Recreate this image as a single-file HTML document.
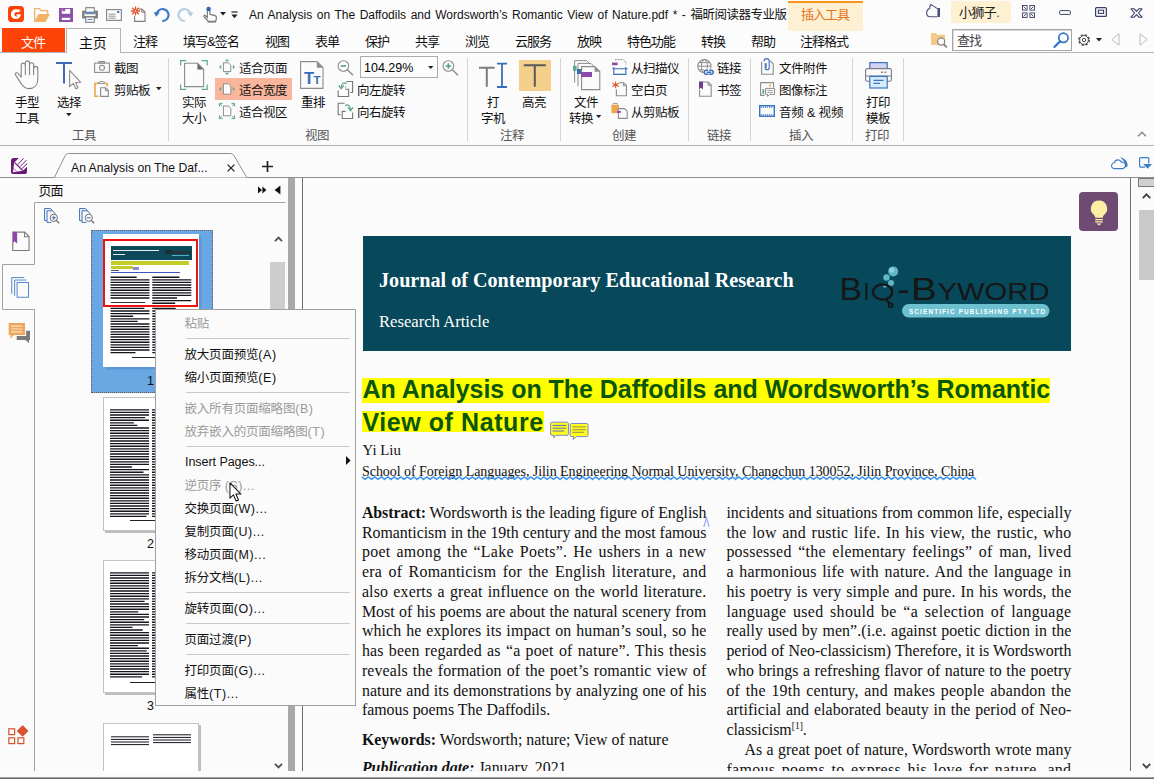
<!DOCTYPE html>
<html lang="zh">
<head>
<meta charset="utf-8">
<title>An Analysis on The Daffodils and Wordsworth’s Romantic View of Nature.pdf</title>
<style>
*{box-sizing:border-box;margin:0;padding:0}
html,body{width:1154px;height:779px;overflow:hidden;background:#fff}
body{position:relative;font-family:"Liberation Sans","Noto Sans CJK SC",sans-serif;font-size:12px;color:#111;line-height:1}
.a{position:absolute}
.t{position:absolute;white-space:nowrap;line-height:14px;height:14px;font-size:12.5px;letter-spacing:-.5px}
.l{letter-spacing:0}
.sep{position:absolute;width:1px;background:#d4d4d4;top:58px;height:83px}
.gl{color:#555}
svg{position:absolute;overflow:visible}
/* document */
.ser{font-family:"Liberation Serif",serif}
.pl{position:absolute;white-space:nowrap;font-family:"Liberation Serif",serif;font-size:15.9px;line-height:20px;height:20px;color:#111;text-align:justify;text-align-last:justify}
.mi{position:absolute;left:28.500px;white-space:nowrap;height:16px;line-height:16px;font-size:12.5px;color:#111;letter-spacing:-.2px}
.mi.d{color:#9a9a9a}
.l2{letter-spacing:.55px}
.ms{position:absolute;left:30px;right:5px;height:1px;background:#c8c8c8}
.tb{top:7px;color:#111;font-size:13px;letter-spacing:-1px}
.c1{left:361.900px;width:344.500px}
.c2{left:726.4px;width:345px}
.nj{text-align:left;text-align-last:left;width:auto}
.tx{background:repeating-linear-gradient(#16161c 0,#16161c 1.300px,#e8e8ec 2.050px,#e8e8ec 2.150px,#16161c 2.600px)}
</style>
</head>
<body>
<div class="a" id="titlebar" style="left:0;top:0;width:1154px;height:28px;background:#fcfcfc">
<!-- foxit logo -->
<svg style="left:8px;top:6px" width="16" height="16" viewBox="0 0 16 16"><rect width="16" height="16" rx="3.600" fill="#fd4208"/><circle cx="7.800" cy="8.200" r="4.900" fill="#fff"/><circle cx="8.700" cy="8.300" r="2.300" fill="#fd4208"/><path d="M8.700 8.300L13.200 3.800 13.600 8.300z" fill="#fd4208"/><rect x="8.600" y="8.300" width="3.700" height="1.700" fill="#fff"/><path d="M10.200 3.600l2.600 1.600" stroke="#fff" stroke-width="1.300" stroke-dasharray="1 .5"/></svg>
<!-- open folder -->
<svg style="left:34px;top:8px" width="17" height="14" viewBox="0 0 17 14"><path d="M.7 13.600V.7h4.900l1.400 1.900h6.600v3.500" fill="none" stroke="#f0b367" stroke-width="1.300"/><path d="M.2 13.900L4.400 6.100H15.900L11.600 13.900z" fill="#f0b367"/></svg>
<!-- save -->
<svg style="left:59px;top:8px" width="14" height="14" viewBox="0 0 14 14"><rect width="14" height="14" fill="#8b50a8"/><rect x="2.800" y="1" width="8.400" height="4.800" fill="#fcfcfc"/><rect x="3.400" y="1" width="2.800" height="2.200" fill="#8b50a8"/><rect x="2.800" y="9.800" width="8.400" height="2.200" fill="#fcfcfc"/></svg>
<!-- print -->
<svg style="left:82px;top:7px" width="16" height="16" viewBox="0 0 16 16"><rect x="1.300" y="4.900" width="13.400" height="5.400" fill="#fcfcfc" stroke="#7d7d7d" stroke-width="2.400"/><rect x="3.700" y=".7" width="8.600" height="6" fill="#fcfcfc" stroke="#7d7d7d" stroke-width="1.100"/><rect x="4.200" y="4.700" width="7.600" height="1.700" fill="#4e86c4"/><rect x="3.700" y="10" width="8.600" height="5.300" fill="#fcfcfc" stroke="#7d7d7d" stroke-width="1.100"/><rect x="5.400" y="11.900" width="5.200" height="1" fill="#4e86c4"/></svg>
<!-- email -->
<svg style="left:106px;top:9px" width="16" height="12" viewBox="0 0 16 12"><rect x=".6" y=".6" width="14.8" height="10.8" fill="#fcfcfc" stroke="#8a8a8a" stroke-width="1.2"/><rect x="11.2" y="2" width="2" height="2" fill="#2f63b0"/><path d="M2.6 5.2h7M2.6 7.2h7M2.6 9.2h7" stroke="#8a8a8a" stroke-width=".9"/></svg>
<!-- new -->
<svg style="left:130px;top:6px" width="16" height="16" viewBox="130 6 16 16"><path d="M138.600 9h3.400l3 3v9.400h-10.400v-5.400" fill="none" stroke="#7d7d7d" stroke-width="1.100"/><path d="M141.800 9.200v3h3" fill="none" stroke="#7d7d7d" stroke-width="1"/><path d="M135.500 6.400v9.200M130.900 11h9.200M132.200 7.700l6.600 6.600M132.200 14.300l6.600-6.600" stroke="#e2512a" stroke-width="1.300"/><circle cx="135.500" cy="11" r=".8" fill="#fcfcfc"/></svg>
<!-- undo -->
<svg style="left:153px;top:6px" width="17" height="17" viewBox="0 0 17 17"><path d="M3.6 8.2A6 6 0 1 1 9.2 15" fill="none" stroke="#3b7cc4" stroke-width="2.2"/><path d="M.6 6.2l6.2.2-3.6 4.4z" fill="#3b7cc4"/></svg>
<!-- redo -->
<svg style="left:177px;top:6px" width="17" height="17" viewBox="0 0 17 17"><path d="M13.4 8.2A6 6 0 1 0 7.8 15" fill="none" stroke="#b4cfe2" stroke-width="2.2"/><path d="M16.4 6.2l-6.2.2 3.6 4.4z" fill="#b4cfe2"/></svg>
<!-- hand pointer -->
<svg style="left:203px;top:6px" width="15" height="17" viewBox="0 0 15 17"><path d="M4.300 11.400V4.600a1.300 1.300 0 0 1 2.600 0v3.800l5 1.200c1.200.3 1.700 1 1.500 2.200l-.6 3.400H5.200L1 10.600c-.5-.8.500-1.700 1.300-1z" fill="#fcfcfc" stroke="#6e6e6e" stroke-width="1.100"/><path d="M4.400 16h8.400" stroke="#6e6e6e" stroke-width="1.100"/><circle cx="5.600" cy="3" r="2.200" fill="#2f63b0"/></svg>
<svg style="left:220px;top:12px" width="6" height="4" viewBox="0 0 6 4"><path d="M0 0h6L3 3.6z" fill="#222"/></svg>
<svg style="left:231px;top:11px" width="7" height="8" viewBox="0 0 7 8"><path d="M.4 1h6.2" stroke="#222" stroke-width="1.2"/><path d="M.4 3.6h6.2L3.5 7.2z" fill="#222"/></svg>
<div class="t" style="left:249px;top:7px;font-size:13px;line-height:16px;height:16px;color:#111" id="ttl"><span style="font-size:12px;letter-spacing:0;word-spacing:1.2px">An Analysis on The Daffodils and Wordsworth’s Romantic View of Nature.pdf * - </span><span style="font-size:12.5px;letter-spacing:-.5px">福昕阅读器专业版</span></div>
<!-- insert tools context tab -->
<!-- skin -->
<svg style="left:926px;top:4px" width="15" height="14" viewBox="0 0 15 14"><path d="M11.400 12.800H4.200C2 12.800.6 11 .6 8.800.6 6.600 2 5.200 3.600 4.600L4.400.6 6.400 1.400 11.400 4.600" fill="none" stroke="#4a4f7a" stroke-width="1.100" stroke-linejoin="round"/><rect x="11.400" y="4" width="2.600" height="9" fill="#4a4f7a"/></svg>
<div class="a" style="left:951px;top:1px;width:60px;height:22px;background:#fdf1d2"></div>
<div class="t" style="left:959px;top:5px;font-size:13px;letter-spacing:-.6px;line-height:16px;height:16px;color:#222">小狮子<span style="color:#5a4a3a">.</span></div>
<!-- fullscreen -->
<svg style="left:1022px;top:5px" width="13" height="13" viewBox="0 0 13 13" fill="none" stroke="#3a3f66" stroke-width=".9"><rect x=".5" y=".5" width="4.6" height="4.6"/><rect x="7.9" y=".5" width="4.6" height="4.6"/><rect x=".5" y="7.9" width="4.6" height="4.6"/><rect x="7.9" y="7.9" width="4.6" height="4.6"/><path d="M1.6 1.6l2.4 2.4M11.4 1.6L9 4M1.6 11.4L4 9M11.4 11.4L9 9" stroke-width=".9"/></svg>
<!-- min -->
<svg style="left:1059px;top:10px" width="12" height="5" viewBox="0 0 12 5"><rect x=".6" y=".6" width="10.8" height="3.8" rx="1" fill="none" stroke="#3a3f66" stroke-width="1"/></svg>
<!-- max -->
<svg style="left:1095px;top:7px" width="12" height="10" viewBox="0 0 12 10"><rect x=".6" y=".6" width="10.8" height="8.8" rx="1" fill="none" stroke="#3a3f66" stroke-width="1.2"/><rect x="3.4" y="3.2" width="5.2" height="3.2" fill="none" stroke="#3a3f66" stroke-width="1.1"/></svg>
<!-- close -->
<svg style="left:1130px;top:8px" width="13" height="10" viewBox="0 0 13 10"><path d="M1 .8h3.2L6.5 3.4 8.8.8H12L8.4 5 12 9.2H8.8L6.5 6.6 4.2 9.2H1L4.6 5z" fill="none" stroke="#3a3f66" stroke-width="1.1" stroke-linejoin="round"/></svg>
</div>

<div class="a" id="tabrow" style="left:0;top:28px;width:1154px;height:25px;background:#fcfcfc;border-bottom:1px solid #b4b4b4">
<div class="a" style="left:2px;top:0;width:63px;height:24px;background:#fd4308"></div>
<div class="t" style="left:21px;top:8px;color:#fff;font-size:13px;letter-spacing:-1px">文件</div>
<div class="a" style="left:66px;top:0;width:55px;height:25px;background:#fcfcfc;border:1px solid #b4b4b4;border-bottom:none"></div>
<div class="t" style="left:79px;top:7px;font-size:14px;letter-spacing:-.3px;line-height:16px;height:16px;color:#111">主页</div>
<div class="t tb" style="left:133px">注释</div>
<div class="t tb" style="left:183px">填写&amp;签名</div>
<div class="t tb" style="left:265px">视图</div>
<div class="t tb" style="left:315px">表单</div>
<div class="t tb" style="left:365px">保护</div>
<div class="t tb" style="left:415px">共享</div>
<div class="t tb" style="left:465px">浏览</div>
<div class="t tb" style="left:515px">云服务</div>
<div class="t tb" style="left:577px">放映</div>
<div class="t tb" style="left:627px">特色功能</div>
<div class="t tb" style="left:701px">转换</div>
<div class="t tb" style="left:751px">帮助</div>
<div class="t tb" style="left:800px">注释格式</div>
<!-- search folder -->
<svg style="left:931px;top:5px" width="17" height="15" viewBox="0 0 17 15"><path d="M0 0h5l1.4 1.8H14V12H0z" fill="#f3c98a"/><circle cx="10.2" cy="8.6" r="3.6" fill="#fcfcfc" stroke="#777" stroke-width="1.1"/><path d="M12.8 11.4l3 3" stroke="#777" stroke-width="1.5"/></svg>
<div class="a" style="left:952px;top:1px;width:120px;height:22px;background:#fff;border:1px solid #a6a6a6;box-shadow:inset 1px 1px 0 #d8d8d8"></div>
<div class="t" style="left:957px;top:6px;color:#444;font-size:13px;letter-spacing:-1px">查找</div>
<svg style="left:1053px;top:4px" width="17" height="16" viewBox="0 0 17 16"><circle cx="10.4" cy="5.8" r="4.6" fill="#fff" stroke="#2e75c7" stroke-width="1.7"/><path d="M7 9.4L1.4 15" stroke="#2e75c7" stroke-width="2.2" stroke-linecap="round"/></svg>
<!-- gear -->
<svg style="left:1077px;top:5px" width="14" height="14" viewBox="0 0 14 14"><circle cx="7" cy="7" r="5.2" fill="none" stroke="#444" stroke-width="1.4" stroke-dasharray="2.2 1.9"/><circle cx="7" cy="7" r="4.4" fill="none" stroke="#444" stroke-width=".9"/><circle cx="7" cy="7" r="1.7" fill="none" stroke="#444" stroke-width="1"/></svg>
<svg style="left:1096px;top:10px" width="6" height="4" viewBox="0 0 6 4"><path d="M0 0h6L3 3.4z" fill="#222"/></svg>
<svg style="left:1111px;top:5px" width="9" height="13" viewBox="0 0 9 13"><path d="M8 .8v11.4L.8 6.5z" fill="none" stroke="#bcbcbc" stroke-width="1"/></svg>
<svg style="left:1139px;top:5px" width="9" height="13" viewBox="0 0 9 13"><path d="M1 .8v11.4L8.2 6.5z" fill="none" stroke="#bcbcbc" stroke-width="1"/></svg>
<div class="a" style="left:788px;top:-27px;width:75px;height:30px;background:#fdf0d3;border-top:2px solid #f7941d"></div>
<div class="t" style="left:801px;top:-21px;font-size:13px;letter-spacing:-1px;line-height:16px;height:16px;color:#e8731a">插入工具</div>
</div>

<div class="a" id="ribbonbg" style="left:0;top:53px;width:1154px;height:93px;background:#fbfbfb;border-bottom:1px solid #b4b4b4"></div>
<div class="a" id="ribbon" style="left:0;top:0;width:0;height:0">
<!-- ===== group 工具 ===== -->
<svg style="left:14px;top:60px" width="26" height="30" viewBox="0 0 26 30" fill="none" stroke="#858585" stroke-width="1.100" stroke-linecap="round" stroke-linejoin="round"><path d="M7.200 17.200V5.200a2.070 2.070 0 0 1 4.150 0V14.600M11.350 5V2.900a2.070 2.070 0 0 1 4.150 0V14.600M15.500 4.800a2.070 2.070 0 0 1 4.150 0V14.600M19.650 8.400a2.070 2.070 0 0 1 4.150 0V19c0 6-3.600 9.600-9 9.600-3.600 0-5.600-1.500-7.600-5L1.500 14.900c-.8-1.500.9-2.900 2.300-1.700l3.400 3.800"/></svg>
<div class="t" style="left:15px;top:96px">手型</div>
<div class="t" style="left:15px;top:112px">工具</div>
<svg style="left:56px;top:62px" width="26" height="28" viewBox="0 0 26 28"><path d="M0 1h16M8 1v20.500" stroke="#3a6db5" stroke-width="2" fill="none"/><path d="M13.600 8.400v16.200l3.800-3.200 2.300 5.400 2.300-1-2.400-5.200 5-.4z" fill="#fbfbfb" stroke="#8c8c8c" stroke-width="1.100" stroke-linejoin="round"/></svg>
<div class="t" style="left:57px;top:96px">选择</div>
<svg style="left:66px;top:113px" width="6" height="4" viewBox="0 0 6 4"><path d="M0 0h5.600L2.800 3.200z" fill="#222"/></svg>
<svg style="left:94px;top:61px" width="16" height="12" viewBox="0 0 16 12" fill="none" stroke="#8c8c8c"><rect x="5" y=".5" width="5.600" height="1.600" stroke-width="1"/><rect x=".6" y="2.100" width="14.800" height="9.300" stroke-width="1.100"/><circle cx="8" cy="6.700" r="2.500" stroke-width="1.100"/></svg>
<div class="t" style="left:114px;top:62px">截图</div>
<svg style="left:94px;top:81px" width="16" height="16" viewBox="0 0 16 16" fill="none"><path d="M4.500 2.400H1v12.800h3.600" stroke="#f0a64c" stroke-width="1.600"/><path d="M4.500 2.600V1.200h2V.5h2.600v.7h2v1.400z" stroke="#8c8c8c" stroke-width=".9"/><path d="M11.800 2.500h1.400v3" stroke="#f0a64c" stroke-width="1.600"/><path d="M6.600 6.800h5l2.800 2.800v5.800H6.600z" fill="#fbfbfb" stroke="#8c8c8c" stroke-width="1.100"/><path d="M11.400 7v2.800h2.800" stroke="#8c8c8c" stroke-width="1"/></svg>
<div class="t" style="left:114px;top:84px">剪贴板</div>
<svg style="left:156px;top:87px" width="6" height="4" viewBox="0 0 6 4"><path d="M0 0h5.600L2.800 3.200z" fill="#222"/></svg>
<div class="t gl" style="left:72px;top:129px">工具</div>
<div class="sep" style="left:168px"></div>
<!-- ===== group 视图 ===== -->
<svg style="left:180px;top:60px" width="28" height="30" viewBox="0 0 28 30" fill="none"><path d="M.6 5.600V.6h5.600M21.600.6h5.600v5M27.200 24.400v5h-5.600M6.200 29.400H.6v-5" stroke="#5fa88c" stroke-width="1.200"/><path d="M4.600 3.200h13l6 6v17.400H4.600z" fill="#fbfbfb" stroke="#8c8c8c" stroke-width="1.100"/><path d="M17.400 3.200v6.200h6.200z" fill="#6a6a6a"/></svg>
<div class="t" style="left:182px;top:96px">实际</div>
<div class="t" style="left:182px;top:112px">大小</div>
<svg style="left:219px;top:59px" width="16" height="16" viewBox="0 0 16 16" fill="none"><path d="M4.400 3.800h5l2.400 2.400v6.400H4.400z" fill="#fbfbfb" stroke="#8c8c8c" stroke-width="1"/><path d="M8 0l2.200 2.200H5.800zM8 16l2.200-2.200H5.800zM0 8l2.200-2.200v4.400zM16 8l-2.200-2.200v4.400z" fill="#5fa88c"/></svg>
<div class="t" style="left:239px;top:62px">适合页面</div>
<div class="a" style="left:215px;top:78px;width:77px;height:22px;background:#f9b69d"></div>
<svg style="left:219px;top:81px" width="16" height="16" viewBox="0 0 16 16" fill="none"><path d="M4.400 2.800h5l2.400 2.400v8H4.400z" fill="#fbfbfb" stroke="#8c8c8c" stroke-width="1"/><path d="M0 8l2.200-2.200v4.400zM16 8l-2.200-2.200v4.400z" fill="#5fa88c"/></svg>
<div class="t" style="left:239px;top:84px">适合宽度</div>
<svg style="left:219px;top:103px" width="16" height="16" viewBox="0 0 16 16" fill="none"><path d="M4.400 3h5l2.400 2.400v7.400H4.400z" fill="#fbfbfb" stroke="#8c8c8c" stroke-width="1"/><path d="M.4 3.600V.4h3.200M12.400.4h3.200v3.200M15.600 12.400v3.200h-3.200M3.600 15.600H.4v-3.200M.6.600l2.400 2.400M15.400.6L13 3M.6 15.400L3 13M15.400 15.400L13 13" stroke="#5fa88c" stroke-width="1"/></svg>
<div class="t" style="left:239px;top:106px">适合视区</div>
<svg style="left:300px;top:61px" width="24" height="28" viewBox="0 0 24 28" fill="none"><path d="M.6.600h16.400l6 6v20.800H.6z" fill="#fbfbfb" stroke="#8c8c8c" stroke-width="1.100"/><path d="M16.800.6v6.200h6.200z" fill="#8c8c8c"/><text x="4" y="23" font-family="Liberation Sans,sans-serif" font-weight="bold" font-size="16.5" fill="#3a6db5" stroke="none">T</text><text x="13.4" y="23" font-family="Liberation Sans,sans-serif" font-weight="bold" font-size="11.5" fill="#3a6db5" stroke="none">T</text></svg>
<div class="t" style="left:301px;top:96px">重排</div>
<svg style="left:337px;top:60px" width="17" height="16" viewBox="0 0 17 16" fill="none"><circle cx="6.400" cy="6" r="5.300" fill="#fff" stroke="#8c8c8c" stroke-width="1.100"/><path d="M10.400 9.800l5.600 5.400" stroke="#8c8c8c" stroke-width="1.500"/><path d="M3.600 6h5.600" stroke="#4fa27c" stroke-width="1.600"/></svg>
<div class="a" style="left:360px;top:56px;width:78px;height:22px;background:#fdfdfd;border:1px solid #ababab"></div>
<div class="t" style="left:364px;top:61px;font-size:12.5px;letter-spacing:0;color:#000">104.29%</div>
<svg style="left:428px;top:66px" width="6" height="4" viewBox="0 0 6 4"><path d="M0 0h5.400L2.700 3z" fill="#222"/></svg>
<svg style="left:442px;top:60px" width="17" height="16" viewBox="0 0 17 16" fill="none"><circle cx="6.400" cy="6" r="5.300" fill="#fff" stroke="#8c8c8c" stroke-width="1.100"/><path d="M10.400 9.800l5.600 5.400" stroke="#8c8c8c" stroke-width="1.500"/><path d="M3.600 6h5.600M6.400 3.200v5.600" stroke="#4fa27c" stroke-width="1.600"/></svg>
<svg style="left:336px;top:79px" width="20" height="20" viewBox="336 79 20 20" fill="none"><path d="M346.500 81.500h6.100v11h-2.400" stroke="#777" stroke-width="1.100"/><path d="M338.200 90.300v6.200h10.400v-7.300h-3.400" stroke="#777" stroke-width="1.100"/><path d="M345.400 86.600v1" stroke="#777" stroke-width="1"/><path d="M346.800 83.600c-2.600-1.400-5.400-.6-5.600 4" stroke="#5fa88c" stroke-width="1.200"/><path d="M338.800 85.400l2.400 3.200 2.600-3.200" stroke="#5fa88c" stroke-width="1.500"/></svg>
<div class="t" style="left:357px;top:84px">向左旋转</div>
<svg style="left:336px;top:101px" width="20" height="20" viewBox="336 101 20 20" fill="none"><path d="M344.600 103.300h-6.400v11.400h2.400" stroke="#777" stroke-width="1.100"/><path d="M345.600 111.400h-3.400v7.100h10.400v-6.100" stroke="#777" stroke-width="1.100"/><path d="M345.200 105.600c2.600-1.400 5.200-.6 5.400 4.400" stroke="#5fa88c" stroke-width="1.200"/><path d="M348 107.400l2.600 3.200 2.400-3.200" stroke="#5fa88c" stroke-width="1.500"/></svg>
<div class="t" style="left:357px;top:106px">向右旋转</div>
<div class="t gl" style="left:305px;top:129px">视图</div>
<div class="sep" style="left:467px"></div>
<!-- ===== group 注释 ===== -->
<svg style="left:479px;top:62px" width="29" height="27" viewBox="0 0 29 27" fill="none"><path d="M0 5.800h15.600M7.800 5.800v19" stroke="#7d7d7d" stroke-width="2"/><path d="M18 1.600h10M23 1.600v23.400M18 25h10" stroke="#3a6db5" stroke-width="1.800"/></svg>
<div class="t" style="left:487px;top:96px">打</div>
<div class="t" style="left:481px;top:112px">字机</div>
<div class="a" style="left:519px;top:60px;width:32px;height:31px;background:#f5d08c"></div>
<svg style="left:523px;top:64px" width="24" height="23" viewBox="0 0 24 23" fill="none"><path d="M.8 1.200h22M11.800 1.200v21.600" stroke="#595959" stroke-width="2"/></svg>
<div class="t" style="left:522px;top:96px">高亮</div>
<div class="t gl" style="left:500px;top:129px">注释</div>
<div class="sep" style="left:560px"></div>
<!-- ===== group 创建 ===== -->
<svg style="left:573px;top:60px" width="28" height="30" viewBox="0 0 28 30" fill="none"><path d="M1.600 22.600V.6h12l3.600 3.600" stroke="#8c8c8c" stroke-width="1"/><path d="M5 26.200V3.400h13l3.600 3.600" stroke="#8c8c8c" stroke-width="1"/><path d="M8.600 6.600h13.200l5 5v18H8.600z" fill="#fbfbfb" stroke="#8c8c8c" stroke-width="1.100"/><path d="M21.600 6.600v5.200h5.200z" fill="#8c8c8c"/><rect x="0" y="5.800" width="3.600" height="5" fill="#5fa88c"/><rect x="4" y="9" width="4.200" height="5" fill="#3a6db5"/><rect x="8" y="12" width="11" height="5" fill="#8c4aa8"/></svg>
<div class="t" style="left:574px;top:96px">文件</div>
<div class="t" style="left:569px;top:112px">转换</div>
<svg style="left:596px;top:115px" width="6" height="4" viewBox="0 0 6 4"><path d="M0 0h5.400L2.700 3z" fill="#222"/></svg>
<svg style="left:612px;top:59px" width="16" height="16" viewBox="0 0 16 16" fill="none"><path d="M3 .6h8.400l2.400 2.400v2.600" stroke="#8c8c8c" stroke-width="1" stroke-dasharray="1.800 1"/><rect x="0" y="3.600" width="5.600" height="2.600" fill="#8c4aa8"/><path d="M1.800 8v7.400h12V8M.4 9.800h15.200" stroke="#3a6db5" stroke-width="1.100"/></svg>
<div class="t" style="left:631px;top:62px">从扫描仪</div>
<svg style="left:612px;top:81px" width="16" height="16" viewBox="0 0 16 16" fill="none"><path d="M7.200 1.800h4.400l2.800 2.800v10.200H4.400V8.400" stroke="#8c8c8c" stroke-width="1.100"/><path d="M11.400 2v2.800h2.800" stroke="#8c8c8c" stroke-width="1"/><path d="M3.600.4v6.800M.4 2.200l6.400 3.200M.4 5.400l6.400-3.200" stroke="#e2512a" stroke-width="1.100"/></svg>
<div class="t" style="left:631px;top:84px">空白页</div>
<svg style="left:611px;top:103px" width="17" height="16" viewBox="0 0 17 16" fill="none"><path d="M.4 1.800h7.600v8.400H.4z" fill="#f0a64c"/><path d="M2.200 1.600V.4h4v1.200" stroke="#8c8c8c" stroke-width=".9"/><path d="M7.400 5.600h6.200l2.600 2.600v7.200H7.400z" fill="#fbfbfb" stroke="#8c8c8c" stroke-width="1.100"/><rect x="6" y="8" width="4" height="1.800" fill="#8c4aa8"/></svg>
<div class="t" style="left:631px;top:106px">从剪贴板</div>
<div class="t gl" style="left:612px;top:129px">创建</div>
<div class="sep" style="left:688px"></div>
<!-- ===== group 链接 ===== -->
<svg style="left:697px;top:59px" width="17" height="16" viewBox="0 0 17 16" fill="none"><circle cx="7.400" cy="7.200" r="6.600" stroke="#8c8c8c" stroke-width="1.100"/><ellipse cx="7.400" cy="7.200" rx="3" ry="6.600" stroke="#8c8c8c" stroke-width="1"/><path d="M.8 7.200h13.200M2 3.600h10.800M2 10.800h7" stroke="#8c8c8c" stroke-width="1"/><rect x="6.600" y="9.600" width="10.400" height="6.400" fill="#fbfbfb"/><path d="M11 11.200H9.200a2 2 0 0 0 0 4h2.200M12.200 11.200h2a2 2 0 0 1 0 4h-2M9.600 13.200h4.600" stroke="#3a6db5" stroke-width="1.500"/></svg>
<div class="t" style="left:717px;top:62px">链接</div>
<svg style="left:699px;top:81px" width="13" height="16" viewBox="0 0 13 16" fill="none"><path d="M3.800 1h5.400l3 3v11.200H.6V9" stroke="#8c8c8c" stroke-width="1.100"/><path d="M9 1.200v3h3" stroke="#8c8c8c" stroke-width="1"/><path d="M0 .4h4v8.200l-2-1.800-2 1.800z" fill="#6d3f8e"/></svg>
<div class="t" style="left:717px;top:84px">书签</div>
<div class="t gl" style="left:707px;top:129px">链接</div>
<div class="sep" style="left:750px"></div>
<!-- ===== group 插入 ===== -->
<svg style="left:761px;top:59px" width="13" height="16" viewBox="0 0 13 16" fill="none"><path d="M.6 2.800v12.400h11.600V4.800L9 1.600" stroke="#8c8c8c" stroke-width="1.100"/><path d="M3.200 5v4.600a2 2 0 0 0 4 0V3a2.600 2.600 0 0 0-5.200 0" stroke="#3a6db5" stroke-width="1.100" transform="translate(1 -.8)"/><path d="M5.200 4v5" stroke="#3a6db5" stroke-width="1"/></svg>
<div class="t" style="left:779px;top:62px">文件附件</div>
<svg style="left:760px;top:82px" width="15" height="15" viewBox="0 0 15 15" fill="none"><path d="M.6.600h13v5M.6.600v12.800h4" stroke="#8c8c8c" stroke-width="1.100"/><rect x="2.400" y="7.200" width="1.800" height="4.600" fill="#5fa88c"/><circle cx="10" cy="3.600" r="1.100" fill="#f0a64c"/><path d="M5.600 6.400h9v6h-5l-2 2v-2h-2z" fill="#fbfbfb" stroke="#8c8c8c" stroke-width="1"/><path d="M7.400 8.400h5.400M7.400 10.400h5.400" stroke="#8c8c8c" stroke-width=".8"/></svg>
<div class="t" style="left:779px;top:84px">图像标注</div>
<svg style="left:759px;top:105px" width="16" height="12" viewBox="0 0 16 12" fill="none"><rect x=".7" y=".7" width="14.600" height="10.600" stroke="#3d74c0" stroke-width="1.400"/><path d="M1.600 2.200h13M1.600 9.800h13" stroke="#3d74c0" stroke-width="1.200" stroke-dasharray="1.200 .9"/></svg>
<div class="t" style="left:779px;top:106px;letter-spacing:-.15px">音频 &amp; 视频</div>
<div class="t gl" style="left:789px;top:129px">插入</div>
<div class="sep" style="left:852px"></div>
<!-- ===== group 打印 ===== -->
<svg style="left:865px;top:62px" width="27" height="27" viewBox="0 0 27 27" fill="none"><rect x="4.800" y=".6" width="17.400" height="8" fill="#cfd4f2" stroke="#3d74c0" stroke-width="1.200"/><rect x=".6" y="6.600" width="25.800" height="12.600" rx="1.600" fill="#fbfbfb" stroke="#7d7d7d" stroke-width="1.100"/><path d="M.8 14h25.400" stroke="#7d7d7d" stroke-width="1"/><path d="M16 10.200h2M19.400 10.200h2" stroke="#555" stroke-width="1"/><rect x="4.800" y="14.400" width="17.400" height="11.600" fill="#d6ecfb" stroke="#3d74c0" stroke-width="1.200"/><path d="M8.600 18.400h10M8.600 21.400h6.400" stroke="#3d74c0" stroke-width="1.100"/></svg>
<div class="t" style="left:866px;top:96px">打印</div>
<div class="t" style="left:866px;top:112px">模板</div>
<div class="t gl" style="left:865px;top:129px">打印</div>
<div class="sep" style="left:903px"></div>
<svg style="left:1137px;top:131px" width="10" height="6" viewBox="0 0 10 6"><path d="M1 5.200L5 1.200l4 4" fill="none" stroke="#8a8a8a" stroke-width="1.500"/></svg>
</div>

<!-- DOC TAB BAR -->
<div class="a" id="doctabs" style="left:0;top:146px;width:1154px;height:32px;background:#fbfbfb;border-bottom:1px solid #8e8e8e"></div>
<svg style="left:11px;top:158px" width="16" height="16" viewBox="0 0 16 16"><path d="M2.600 0H16V13.400A2.600 2.600 0 0 1 13.400 16H2.600A2.600 2.600 0 0 1 0 13.400V2.600A2.600 2.600 0 0 1 2.600 0z" fill="#6a1b7a"/><path d="M2 14.200L3.200 4.600 7.800 0H16.200V8.400L11.800 12.800z" fill="#fbfbfb"/><path d="M6.600 6.800L12.600.4M8.800 8.800L15.400 2.200M10.800 10.800L16.200 5.600" stroke="#6a1b7a" stroke-width="1" fill="none"/><path d="M3.400 4.400L11.800 12.600" stroke="#6a1b7a" stroke-width="1.200" fill="none"/><path d="M2.600 10.400L5.800 13.600" stroke="#6a1b7a" stroke-width=".6" fill="none"/></svg>
<svg style="left:50px;top:150px" width="202" height="29" viewBox="0 0 202 29"><path d="M4.400 27.500L15.200 5.600Q16.400 3.500 18.600 3.500H180.600Q182.800 3.500 184 5.600L196.800 27.500" fill="#fbfbfb" stroke="#8e8e8e" stroke-width="1"/></svg>
<div class="t" id="dtab" style="left:71px;top:161px;font-size:12.2px;letter-spacing:0">An Analysis on The Daf...</div>
<svg style="left:227px;top:164px" width="8" height="8" viewBox="0 0 8 8"><path d="M.6.600l6.800 6.800M7.400.6L.6 7.400" stroke="#222" stroke-width="1.300"/></svg>
<svg style="left:262px;top:161px" width="11" height="11" viewBox="0 0 11 11"><path d="M5.500 0v11M0 5.500h11" stroke="#222" stroke-width="1.700"/></svg>
<!-- cloud + download -->
<svg style="left:1111px;top:157px" width="17" height="13" viewBox="0 0 17 13" fill="none"><path d="M3.600 11.600a2.900 2.900 0 0 1-.3-5.800 3.800 3.800 0 0 1 7.200-.6 3.100 3.100 0 0 1 1.400 6.400z" stroke="#3b7cc4" stroke-width="1.100"/><path d="M8.800.4c4.600 0 8 3.600 7.800 8.400-.4 1.400-1.600 1.800-2.800.8 1-3-1-6.800-5-9.200z" fill="#3b7cc4"/></svg>
<svg style="left:1139px;top:157px" width="14" height="12" viewBox="0 0 14 12" fill="none"><path d="M6 10.200H1.800a1.200 1.200 0 0 1-1.200-1.200V1.800A1.200 1.200 0 0 1 1.800.6h6.800a1.200 1.200 0 0 1 1.200 1.200v4.600" stroke="#3b7cc4" stroke-width="1.200"/><path d="M4.200 7h8.800l-4.400 4.800z" fill="#3b7cc4"/></svg>
<!-- LEFT NAV -->
<div class="a" id="leftnav" style="left:0;top:178px;width:302px;height:593px;background:#fbfbfb"></div>
<div class="t" style="left:38.500px;top:184px;font-size:13px;letter-spacing:-1px">页面</div>
<svg style="left:258px;top:186px" width="9" height="8" viewBox="0 0 9 8"><path d="M0 .4l4 3.600-4 3.600zM4.400.4l4 3.600-4 3.600z" fill="#111"/></svg>
<svg style="left:274px;top:185px" width="7" height="10" viewBox="0 0 7 10"><path d="M6.400.4v9.200L.6 5z" fill="#111"/></svg>
<!-- panel inner box w/ tab notch -->
<svg style="left:0;top:200px" width="290" height="575" viewBox="0 0 290 575" fill="none"><path d="M285.500 2.500H34.500V64.500H2.500V109.500H34.500V571" stroke="#a2a2a2" stroke-width="1"/></svg>
<!-- zoom thumbnails icons -->
<svg style="left:44px;top:208px" width="16" height="16" viewBox="0 0 16 16" fill="none"><path d="M2.600 12.600H.6V.6h6l2 2" stroke="#3a6db5" stroke-width="1"/><path d="M7.400 14.400H3V2.800h5.400l3 3" stroke="#3a6db5" stroke-width="1"/><circle cx="9.800" cy="9.800" r="3.600" fill="#fbfbfb" stroke="#6e6e6e" stroke-width="1"/><path d="M12.400 12.600l2.800 2.600" stroke="#6e6e6e" stroke-width="1.300"/><path d="M7.800 9.800h4M9.800 7.800v4" stroke="#3a6db5" stroke-width="1"/></svg>
<svg style="left:79px;top:208px" width="16" height="16" viewBox="0 0 16 16" fill="none"><path d="M2.600 12.600H.6V.6h6l2 2" stroke="#3a6db5" stroke-width="1"/><path d="M7.400 14.400H3V2.800h5.400l3 3" stroke="#3a6db5" stroke-width="1"/><circle cx="9.800" cy="9.800" r="3.600" fill="#fbfbfb" stroke="#6e6e6e" stroke-width="1"/><path d="M12.400 12.600l2.800 2.600" stroke="#6e6e6e" stroke-width="1.300"/><path d="M7.800 9.800h4" stroke="#3a6db5" stroke-width="1"/></svg>
<!-- nav icons -->
<svg style="left:11.500px;top:231px" width="18" height="21" viewBox="0 0 19 21" fill="none"><path d="M5.400.6h8l4.600 4.600v14.800H.8V12" stroke="#7d7d7d" stroke-width="1.200"/><path d="M13.200.8v4.600h4.600" stroke="#7d7d7d" stroke-width="1.100"/><path d="M.4 0h5v12.800l-2.500-2.600-2.500 2.600z" fill="#8a4aa6"/></svg>
<svg style="left:11px;top:277px" width="18.500" height="21" viewBox="0 0 19 22" fill="none" stroke="#4a82c4" stroke-width="1"><path d="M.6 17.600V.6h13"/><path d="M3.600 19.600V3.200h12.400"/><rect x="6.200" y="5.800" width="12" height="15.400" fill="#fbfbfb"/></svg>
<svg style="left:8px;top:322px" width="23" height="22" viewBox="0 0 23 22" fill="none"><path d="M8.700 8.800H22V18H21v3.300L17.500 18H8.700z" fill="#7a7a7a"/><path d="M.7 1H17v12H6L2.500 16.500V13H.7z" fill="#f0a65a" stroke="#fbfbfb" stroke-width="2.200"/><path d="M.7 1H17v12H6L2.500 16.500V13H.7z" fill="#f0a65a"/><path d="M3 4.200h11.400M3 7h11.400M3 9.800h11.400" stroke="#fbe3c4" stroke-width="1.200"/></svg>
<svg style="left:8px;top:725px" width="20" height="20" viewBox="0 0 20 20" fill="none" stroke="#d9532c" stroke-width="1.200"><rect x=".8" y="3.800" width="5.800" height="5.800"/><rect x=".8" y="12.800" width="5.800" height="5.800"/><rect x="10" y="12.800" width="5.800" height="5.800"/><path d="M14.600 1l5 5-5 5-5-5z" fill="#d9532c"/></svg>
<!-- thumbnails -->
<div class="a" style="left:91px;top:230px;width:122px;height:163px;background:#6aa8e3;border:1px dotted #6b5a4a"></div>
<div class="a pg" style="left:103px;top:234px;width:96px;height:133px;background:#fff;box-shadow:2.5px 2.5px 0 #5a96d6"></div>
<div class="a" style="left:110.500px;top:246px;width:81px;height:13.600px;background:#0c4a5a"></div>
<div class="a" style="left:112.500px;top:250px;width:46px;height:1.200px;background:#e4eef0"></div>
<div class="a" style="left:112.500px;top:254px;width:12px;height:1.200px;background:#e4eef0"></div>
<div class="a" style="left:165px;top:249.500px;width:7px;height:4px;background:#1c2f36"></div>
<div class="a" style="left:172px;top:251px;width:18px;height:2.500px;background:#25333a"></div>
<div class="a" style="left:172px;top:254.500px;width:17px;height:1.500px;background:#58aebb"></div>
<div class="a" style="left:110.500px;top:261.400px;width:78.500px;height:3.200px;background:#c4cc2a"></div>
<div class="a" style="left:110.500px;top:265.600px;width:22px;height:3.200px;background:#c4cc2a"></div>
<div class="a" style="left:133px;top:266.500px;width:5.500px;height:3px;background:#8a8ad6"></div>
<div class="a" style="left:110.500px;top:269.800px;width:8px;height:1px;background:#555"></div>
<div class="a" style="left:110.500px;top:271.600px;width:69px;height:1.800px;background:#4257c4"></div>
<svg style="left:0;top:0" width="1" height="1"><path d="M110.5 277.20h26.2M110.5 279.80h39.0M110.5 282.40h39.0M110.5 285.00h39.0M110.5 287.60h39.0M110.5 290.20h39.0M110.5 292.80h39.0M110.5 295.40h39.0M110.5 298.00h39.0" stroke="#15151d" stroke-width="1.35" fill="none"/></svg>
<div class="a" style="left:110.500px;top:301.500px;width:34px;height:1.400px;background:#333"></div>
<svg style="left:0;top:0" width="1" height="1"><path d="M152.3 277.20h27.1M152.3 279.80h39.0M152.3 282.40h39.0M152.3 285.00h39.0M152.3 287.60h39.0M152.3 290.20h39.0M152.3 292.80h39.0M152.3 295.40h39.0M152.3 298.00h24.7M152.3 300.60h39.0M152.3 303.20h22.9" stroke="#15151d" stroke-width="1.35" fill="none"/></svg>
<svg style="left:0;top:0" width="1" height="1"><path d="M110.5 308.40h33.9M110.5 311.00h39.0M110.5 313.60h39.0M110.5 316.20h22.7M110.5 318.80h39.0M110.5 321.40h27.2M110.5 324.00h39.0M110.5 326.60h39.0M110.5 329.20h39.0M110.5 331.80h39.0M110.5 334.40h39.0M110.5 337.00h39.0M110.5 339.60h39.0M110.5 342.20h39.0M110.5 344.80h39.0M110.5 347.40h39.0M110.5 350.00h39.0M110.5 352.60h25.0" stroke="#15151d" stroke-width="1.35" fill="none"/></svg>
<svg style="left:0;top:0" width="1" height="1"><path d="M152.3 308.40h23.4M152.3 311.00h39.0M152.3 313.60h32.2M152.3 316.20h39.0M152.3 318.80h39.0M152.3 321.40h39.0M152.3 324.00h39.0M152.3 326.60h39.0M152.3 329.20h36.3M152.3 331.80h26.4M152.3 334.40h39.0M152.3 337.00h39.0M152.3 339.60h39.0M152.3 342.20h34.3M152.3 344.80h39.0M152.3 347.40h39.0M152.3 350.00h39.0M152.3 352.60h22.5" stroke="#15151d" stroke-width="1.35" fill="none"/></svg>
<div class="a" style="left:131.600px;top:356.600px;width:60px;height:1px;background:#222"></div>
<div class="a" style="left:103px;top:239px;width:95px;height:68px;border:2px solid #ee1111"></div>
<div class="t" style="left:147px;top:374px;font-size:12.5px;letter-spacing:0;color:#111">1</div>
<div class="a pg" style="left:103px;top:397px;width:96px;height:134px;background:#fff;border:1px solid #c4c4c4;box-shadow:2px 2px 0 #bdbdbd"></div>
<svg style="left:0;top:0" width="1" height="1"><path d="M110.0 409.80h39.0M110.0 412.40h39.0M110.0 415.00h39.0M110.0 417.60h35.2M110.0 420.20h39.0M110.0 422.80h23.8M110.0 425.40h27.3M110.0 428.00h39.0M110.0 430.60h39.0M110.0 433.20h39.0M110.0 435.80h39.0M110.0 438.40h39.0M110.0 441.00h39.0M110.0 443.60h39.0M110.0 446.20h39.0M110.0 448.80h39.0M110.0 451.40h39.0M110.0 454.00h39.0M110.0 456.60h39.0M110.0 459.20h39.0M110.0 461.80h39.0M110.0 464.40h39.0M110.0 467.00h21.9M110.0 469.60h39.0M110.0 472.20h33.5M110.0 474.80h39.0M110.0 477.40h39.0M110.0 480.00h39.0M110.0 482.60h39.0M110.0 485.20h39.0M110.0 487.80h39.0M110.0 490.40h39.0M110.0 493.00h39.0M110.0 495.60h39.0M110.0 498.20h39.0M110.0 500.80h39.0M110.0 503.40h39.0M110.0 506.00h39.0M110.0 508.60h39.0M110.0 511.20h39.0M110.0 513.80h39.0M110.0 516.40h36.5" stroke="#15151d" stroke-width="1.35" fill="none"/></svg>
<svg style="left:0;top:0" width="1" height="1"><path d="M152.0 409.80h39.0M152.0 412.40h39.0M152.0 415.00h39.0M152.0 417.60h39.0M152.0 420.20h39.0M152.0 422.80h39.0M152.0 425.40h39.0M152.0 428.00h39.0M152.0 430.60h25.2M152.0 433.20h34.8M152.0 435.80h27.5M152.0 438.40h39.0M152.0 441.00h39.0M152.0 443.60h39.0M152.0 446.20h39.0M152.0 448.80h39.0M152.0 451.40h39.0M152.0 454.00h39.0M152.0 456.60h39.0M152.0 459.20h39.0M152.0 461.80h39.0M152.0 464.40h33.0M152.0 467.00h39.0M152.0 469.60h25.2M152.0 472.20h39.0M152.0 474.80h39.0M152.0 477.40h39.0M152.0 480.00h39.0M152.0 482.60h25.3M152.0 485.20h30.3M152.0 487.80h39.0M152.0 490.40h39.0M152.0 493.00h39.0M152.0 495.60h39.0M152.0 498.20h39.0M152.0 500.80h39.0M152.0 503.40h39.0M152.0 506.00h39.0M152.0 508.60h39.0M152.0 511.20h39.0M152.0 513.80h39.0M152.0 516.40h39.0" stroke="#15151d" stroke-width="1.35" fill="none"/></svg>
<div class="a" style="left:130px;top:520px;width:60px;height:1px;background:#222"></div>
<div class="t" style="left:147px;top:537px;font-size:12.5px;letter-spacing:0;color:#111">2</div>
<div class="a pg" style="left:103px;top:560px;width:96px;height:133px;background:#fff;border:1px solid #c4c4c4;box-shadow:2px 2px 0 #bdbdbd"></div>
<svg style="left:0;top:0" width="1" height="1"><path d="M110.0 572.80h39.0M110.0 575.40h39.0M110.0 578.00h39.0M110.0 580.60h39.0M110.0 583.20h39.0M110.0 585.80h39.0M110.0 588.40h39.0M110.0 591.00h39.0M110.0 593.60h39.0M110.0 596.20h39.0M110.0 598.80h39.0M110.0 601.40h34.6M110.0 604.00h39.0M110.0 606.60h39.0M110.0 609.20h39.0M110.0 611.80h28.2M110.0 614.40h39.0M110.0 617.00h39.0M110.0 619.60h34.2M110.0 622.20h39.0M110.0 624.80h39.0M110.0 627.40h22.5M110.0 630.00h32.7M110.0 632.60h39.0M110.0 635.20h39.0M110.0 637.80h39.0M110.0 640.40h39.0M110.0 643.00h39.0M110.0 645.60h27.9M110.0 648.20h39.0M110.0 650.80h36.7M110.0 653.40h39.0M110.0 656.00h39.0M110.0 658.60h39.0M110.0 661.20h39.0M110.0 663.80h39.0M110.0 666.40h39.0M110.0 669.00h39.0M110.0 671.60h39.0M110.0 674.20h39.0M110.0 676.80h32.1" stroke="#15151d" stroke-width="1.35" fill="none"/></svg>
<svg style="left:0;top:0" width="1" height="1"><path d="M152.0 572.80h39.0M152.0 575.40h39.0M152.0 578.00h39.0M152.0 580.60h39.0M152.0 583.20h39.0M152.0 585.80h39.0M152.0 588.40h39.0M152.0 591.00h39.0M152.0 593.60h39.0M152.0 596.20h39.0M152.0 598.80h39.0M152.0 601.40h39.0M152.0 604.00h39.0M152.0 606.60h39.0M152.0 609.20h39.0M152.0 611.80h28.2M152.0 614.40h34.5M152.0 617.00h39.0M152.0 619.60h39.0M152.0 622.20h39.0M152.0 624.80h39.0M152.0 627.40h39.0M152.0 630.00h39.0M152.0 632.60h39.0M152.0 635.20h39.0M152.0 637.80h39.0M152.0 640.40h22.8M152.0 643.00h39.0M152.0 645.60h31.9M152.0 648.20h22.6M152.0 650.80h35.4M152.0 653.40h39.0M152.0 656.00h39.0M152.0 658.60h39.0M152.0 661.20h39.0M152.0 663.80h27.1M152.0 666.40h39.0M152.0 669.00h39.0M152.0 671.60h39.0M152.0 674.20h39.0M152.0 676.80h34.6" stroke="#15151d" stroke-width="1.35" fill="none"/></svg>
<div class="a" style="left:130px;top:682px;width:60px;height:1px;background:#222"></div>
<div class="t" style="left:147px;top:699px;font-size:12.5px;letter-spacing:0;color:#111">3</div>
<div class="a pg" style="left:103px;top:723px;width:96px;height:48px;background:#fff;border:1px solid #c4c4c4;border-bottom:none;box-shadow:2px 2px 0 #bdbdbd"></div>
<svg style="left:0;top:0" width="1" height="1"><path d="M111.0 736.80h38.0M111.0 739.40h38.0M111.0 742.00h38.0M111.0 744.60h38.0" stroke="#15151d" stroke-width="1.0" fill="none"/></svg>
<svg style="left:0;top:0" width="1" height="1"><path d="M153.0 734.80h38.0M153.0 737.40h38.0M153.0 740.00h38.0M153.0 742.60h38.0" stroke="#15151d" stroke-width="1.0" fill="none"/></svg>
<!-- thumb scrollbar -->
<svg style="left:273.500px;top:236px" width="9" height="6" viewBox="0 0 9 6"><path d="M1 5.200l3.500-3.600 3.500 3.600" fill="none" stroke="#555" stroke-width="1.900"/></svg>
<div class="a" style="left:270px;top:262px;width:15px;height:180px;background:#cdcdcd"></div>
<svg style="left:273.500px;top:763px" width="9" height="6" viewBox="0 0 9 6"><path d="M1 .8l3.500 3.600 3.500-3.600" fill="none" stroke="#555" stroke-width="1.900"/></svg>
<!-- splitter -->
<div class="a" style="left:288px;top:178px;width:7px;height:593px;background:#a9a9a9"></div>
<div class="a" style="left:295px;top:179px;width:7px;height:592px;background:#fdfdfd"></div>

<!-- DOC AREA -->
<div class="a" id="docarea" style="left:302px;top:178px;width:829px;height:593px;background:#fbfbfb;border-left:1px solid #6e6e6e;border-right:1px solid #6e6e6e;overflow:hidden"></div>
<div class="a" style="left:1131px;top:178px;width:23px;height:593px;background:#fbfbfb"></div>
<div class="a" id="clip" style="left:303px;top:179px;width:828px;height:592px;overflow:hidden">
<div class="a" style="left:-303px;top:-179px;width:0;height:0">
<!-- banner -->
<div class="a" style="left:363px;top:236px;width:708px;height:115px;background:#07485a"></div>
<div class="t ser" id="jt" style="letter-spacing:0;left:379px;top:268px;font-size:20.15px;line-height:24px;height:24px;font-weight:bold;color:#fff">Journal of Contemporary Educational Research</div>
<div class="t ser" id="ra" style="letter-spacing:0;left:379px;top:312px;font-size:16.64px;line-height:20px;height:20px;color:#fff">Research Article</div>
<!-- logo -->
<svg style="left:835px;top:262px" width="220" height="60" viewBox="835 262 220 60">
<circle cx="893.200" cy="271.400" r="5" fill="#5fb6c6"/><circle cx="891.800" cy="270" r="2.600" fill="#8fd2dc"/>
<circle cx="886.500" cy="277.500" r="3.200" fill="#5fb6c6"/><circle cx="891" cy="283" r="3" fill="#5fb6c6"/><circle cx="884.900" cy="286" r="1.800" fill="#5fb6c6"/>
<g font-family="Liberation Sans,sans-serif" fill="#161616">
<text x="839.5" y="300" font-size="31.500" textLength="22.5" lengthAdjust="spacingAndGlyphs">B</text>
<text x="863.500" y="300" font-size="23.500" textLength="6" lengthAdjust="spacingAndGlyphs">I</text>
<text x="897.500" y="300" font-size="31.500" textLength="12" lengthAdjust="spacingAndGlyphs">-</text>
<text x="911" y="300" font-size="31.500" textLength="26" lengthAdjust="spacingAndGlyphs">B</text>
<text x="937.500" y="300" font-size="23.500" textLength="112" lengthAdjust="spacingAndGlyphs">YWORD</text>
</g>
<ellipse cx="882.6" cy="292" rx="9.6" ry="7.6" fill="none" stroke="#161616" stroke-width="2.4"/>
<path d="M886.2 299l4 5.600" stroke="#161616" stroke-width="2.400" fill="none"/><circle cx="890.600" cy="305.200" r="2" fill="none" stroke="#161616" stroke-width="1.600"/>
<rect x="902" y="304" width="147.500" height="13.600" rx="6.800" fill="#6dc0cf"/>
<text x="909" y="313.600" font-family="Liberation Sans,sans-serif" font-weight="bold" font-size="6.3" fill="#fff" textLength="136" lengthAdjust="spacing">SCIENTIFIC PUBLISHING PTY LTD</text>
</svg>
<!-- title -->
<div class="a" style="left:362px;top:378px;width:688px;height:25px;background:#ffff00"></div>
<div class="a" style="left:362px;top:411px;width:182px;height:21px;background:#ffff00"></div>
<div class="t" id="t1" style="left:362.4px;top:374px;font-size:25px;letter-spacing:-.03px;line-height:30px;height:30px;font-weight:bold;color:#0a560a">An Analysis on The Daffodils and Wordsworth’s Romantic</div>
<div class="t" id="t2" style="left:362.4px;top:407px;font-size:25px;letter-spacing:.58px;line-height:30px;height:30px;font-weight:bold;color:#0a560a">View of Nature</div>
<!-- comment icons -->
<svg style="left:550px;top:421px" width="40" height="20" viewBox="0 0 40 20"><path d="M2 1.200h15a1.400 1.400 0 0 1 1.400 1.400v10.300a1.400 1.400 0 0 1-1.400 1.400H6.400L3.400 16.600l.8-2.300H2A1.400 1.400 0 0 1 .6 12.900V2.600A1.400 1.400 0 0 1 2 1.200z" fill="#ffff1f" stroke="#7f86c8" stroke-width="1"/><path d="M2.600 4.400h13.600M2.600 7.200h13.600M2.600 10h11.600" stroke="#5a64c0" stroke-width="1"/><path d="M21.600 2.500h15a1.400 1.400 0 0 1 1.400 1.400v10.300a1.400 1.400 0 0 1-1.400 1.400H26.600L23 18.400l.8-2.800H21.600a1.400 1.400 0 0 1-1.400-1.400V3.900a1.400 1.400 0 0 1 1.400-1.400z" fill="#ffff1f" stroke="#7f86c8" stroke-width="1"/><path d="M22.400 5.800h13.400M22.400 8.600h13.400M22.400 11.400h11.400" stroke="#a8a23e" stroke-width="1.300"/></svg>
<div class="t ser" id="yl" style="letter-spacing:0;left:362.6px;top:441px;font-size:14.8px;line-height:18px;height:18px;color:#111">Yi Liu</div>
<div class="t ser" id="sc" style="left:362px;top:463px;font-size:14px;letter-spacing:-.05px;line-height:18px;height:18px;color:#111">School of Foreign Languages, Jilin Engineering Normal University, Changchun 130052, Jilin Province, China</div>
<svg style="left:0;top:0" width="1" height="1"><path d="M361.800 476.900l3.250 2.500l3.250 -2.500l3.250 2.500l3.250 -2.500l3.250 2.500l3.250 -2.500l3.250 2.500l3.250 -2.500l3.250 2.500l3.250 -2.500l3.250 2.500l3.250 -2.500l3.250 2.500l3.250 -2.500l3.250 2.500l3.250 -2.500l3.250 2.500l3.250 -2.500l3.250 2.500l3.250 -2.500l3.250 2.500l3.250 -2.500l3.250 2.500l3.250 -2.500l3.250 2.500l3.250 -2.500l3.250 2.500l3.250 -2.500l3.250 2.500l3.250 -2.500l3.250 2.500l3.250 -2.500l3.250 2.500l3.250 -2.500l3.250 2.500l3.250 -2.500l3.250 2.500l3.250 -2.500l3.250 2.500l3.250 -2.500l3.250 2.500l3.250 -2.500l3.250 2.500l3.250 -2.500l3.250 2.500l3.250 -2.500l3.250 2.500l3.250 -2.500l3.250 2.500l3.250 -2.500l3.250 2.500l3.250 -2.500l3.250 2.500l3.250 -2.500l3.250 2.500l3.250 -2.500l3.250 2.500l3.250 -2.500l3.250 2.500l3.250 -2.500l3.250 2.500l3.250 -2.500l3.250 2.500l3.250 -2.500l3.250 2.500l3.250 -2.500l3.250 2.500l3.250 -2.500l3.250 2.500l3.250 -2.500l3.250 2.500l3.250 -2.500l3.250 2.500l3.250 -2.500l3.250 2.500l3.250 -2.500l3.250 2.500l3.250 -2.500l3.250 2.500l3.250 -2.500l3.250 2.500l3.250 -2.500l3.250 2.500l3.250 -2.500l3.250 2.500l3.250 -2.500l3.250 2.500l3.250 -2.500l3.250 2.500l3.250 -2.500l3.250 2.500l3.250 -2.500l3.250 2.500l3.250 -2.500l3.250 2.500l3.250 -2.500l3.250 2.500l3.250 -2.500l3.250 2.500l3.250 -2.500l3.250 2.500l3.250 -2.500l3.250 2.500l3.250 -2.500l3.250 2.500l3.250 -2.500l3.250 2.500l3.250 -2.500l3.250 2.500l3.250 -2.500l3.250 2.500l3.250 -2.500l3.250 2.500l3.250 -2.500l3.250 2.500l3.250 -2.500l3.250 2.500l3.250 -2.500l3.250 2.500l3.250 -2.500l3.250 2.500l3.250 -2.500l3.250 2.500l3.250 -2.500l3.250 2.500l3.250 -2.500l3.250 2.500l3.250 -2.500l3.250 2.500l3.250 -2.500l3.250 2.500l3.250 -2.500l3.250 2.500l3.250 -2.500l3.250 2.500l3.250 -2.500l3.250 2.500l3.250 -2.500l3.250 2.500l3.250 -2.500l3.250 2.500l3.250 -2.500l3.250 2.500l3.250 -2.500l3.250 2.500l3.250 -2.500l3.250 2.500l3.250 -2.500l3.250 2.500l3.250 -2.500l3.250 2.500l3.250 -2.500l3.250 2.500l3.250 -2.500l3.250 2.500l3.250 -2.500l3.250 2.500l3.250 -2.500l3.250 2.500l3.250 -2.500l3.250 2.500l3.250 -2.500l3.250 2.500l3.250 -2.500l3.250 2.500l3.250 -2.500l3.250 2.500l3.250 -2.500l3.250 2.500l3.250 -2.500l3.250 2.500l3.250 -2.500l3.250 2.500l3.250 -2.500l3.250 2.500l3.250 -2.500l3.250 2.500l3.250 -2.500l3.250 2.500l3.250 -2.500l3.250 2.500l3.250 -2.500l3.250 2.500l3.250 -2.500l3.250 2.500l3.250 -2.500l3.250 2.500l3.250 -2.500l3.250 2.500" fill="none" stroke="#3f97ee" stroke-width="1.500" stroke-linejoin="round"/></svg>
<!-- column 1 -->
<div class="pl c1" style="top:502.90px;letter-spacing:-0.046px"><b>Abstract:</b> Wordsworth is the leading figure of English</div>
<div class="pl c1" style="top:522.65px;letter-spacing:0.002px">Romanticism in the 19th century and the most famous</div>
<div class="pl c1" style="top:542.40px;letter-spacing:0.313px">poet among the “Lake Poets”. He ushers in a new</div>
<div class="pl c1" style="top:562.15px;letter-spacing:0.285px">era of Romanticism for the English literature, and</div>
<div class="pl c1" style="top:581.90px;letter-spacing:0.162px">also exerts a great influence on the world literature.</div>
<div class="pl c1" style="top:601.65px;letter-spacing:0.049px">Most of his poems are about the natural scenery from</div>
<div class="pl c1" style="top:621.40px;letter-spacing:0.132px">which he explores its impact on human’s soul, so he</div>
<div class="pl c1" style="top:641.15px;letter-spacing:0.184px">has been regarded as “a poet of nature”. This thesis</div>
<div class="pl c1" style="top:660.90px;letter-spacing:0.139px">reveals the formation of the poet’s romantic view of</div>
<div class="pl c1" style="top:680.65px;letter-spacing:0.052px">nature and its demonstrations by analyzing one of his</div>
<div class="pl c1 nj" style="top:700.40px">famous poems The Daffodils.</div>
<div class="pl c1 nj" style="top:729.93px"><b>Keywords:</b> Wordsworth; nature; View of nature</div>
<div class="pl c1 nj" style="top:757.93px"><b><i>Publication date:</i></b> January, 2021</div>
<!-- column 2 -->
<div class="pl c2" style="top:502.90px;letter-spacing:0.045px">incidents and situations from common life, especially</div>
<div class="pl c2" style="top:522.65px;letter-spacing:0.254px">the low and rustic life. In his view, the rustic, who</div>
<div class="pl c2" style="top:542.40px;letter-spacing:0.283px">possessed “the elementary feelings” of man, lived</div>
<div class="pl c2" style="top:562.15px;letter-spacing:0.224px">a harmonious life with nature. And the language in</div>
<div class="pl c2" style="top:581.90px;letter-spacing:0.149px">his poetry is very simple and pure. In his words, the</div>
<div class="pl c2" style="top:601.65px;letter-spacing:0.335px">language used should be “a selection of language</div>
<div class="pl c2" style="top:621.40px;letter-spacing:0.084px">really used by men”.(i.e. against poetic diction in the</div>
<div class="pl c2" style="top:641.15px;letter-spacing:0.013px">period of Neo-classicism) Therefore, it is Wordsworth</div>
<div class="pl c2" style="top:660.90px;letter-spacing:0.069px">who brings a refreshing flavor of nature to the poetry</div>
<div class="pl c2" style="top:680.65px;letter-spacing:0.230px">of the 19th century, and makes people abandon the</div>
<div class="pl c2" style="top:700.40px;letter-spacing:0.098px">artificial and elaborated beauty in the period of Neo-</div>
<div class="pl c2 nj" style="top:720.15px">classicism<sup style="font-size:9.5px;line-height:0;vertical-align:6px">[1]</sup>.</div>
<div class="pl c2" style="top:739.90px;letter-spacing:0.052px;padding-left:18px">As a great poet of nature, Wordsworth wrote many</div>
<div class="pl c2" style="top:759.65px;letter-spacing:0.353px">famous poems to express his love for nature, and</div>
<!-- small caret mark -->
<svg style="left:703px;top:517px" width="7" height="11" viewBox="0 0 7 11"><path d="M.8 10L3.500 .8 6.200 10" fill="none" stroke="#a4aaf0" stroke-width="1.200"/></svg>
</div></div>
<!-- lightbulb -->
<div class="a" style="left:1079px;top:192px;width:39px;height:39px;background:#6f4a72;border-radius:4px"></div>
<svg style="left:1089px;top:199px" width="20" height="28" viewBox="0 0 20 28"><path d="M10 1.600a8 8 0 0 1 5.200 14.200c-1 1-1.400 1.800-1.400 3H6.200c0-1.200-.4-2-1.400-3A8 8 0 0 1 10 1.600z" fill="#fdeea5"/><path d="M6.200 20.600h7.600M6.200 22.800h7.600" stroke="#fdeea5" stroke-width="1.300"/><path d="M7.400 24.400h5.200l-2.600 2z" fill="#fdeea5"/></svg>
<!-- right scrollbar -->
<div class="a" style="left:1138px;top:178px;width:16px;height:9px;background:#d0d0d0;border:1px solid #777;border-right:none"></div>
<svg style="left:1142px;top:193px" width="9" height="6" viewBox="0 0 9 6"><path d="M.8 5.200l3.700-3.800 3.700 3.800" fill="none" stroke="#444" stroke-width="1.900"/></svg>
<div class="a" style="left:1139px;top:210px;width:15px;height:70px;background:#c9c9c9"></div>
<svg style="left:1142px;top:763px" width="9" height="6" viewBox="0 0 9 6"><path d="M.8.800l3.700 3.800 3.700-3.800" fill="none" stroke="#444" stroke-width="1.900"/></svg>
<!-- bottom strip -->
<div class="a" style="left:0;top:771px;width:1154px;height:6px;background:#fcfcfc"></div>
<div class="a" style="left:0;top:777px;width:1154px;height:2px;background:#6e6e6e;border-top:1px solid #a0a0a0"></div>

<!-- CONTEXT MENU -->
<div class="a" id="menu" style="left:155px;top:309px;width:201px;height:397px;background:#fbfbfb;border:1px solid #a0a0a0">
<div class="mi d" style="top:6px">粘贴</div>
<div class="ms" style="top:28px"></div>
<div class="mi" style="top:37px">放大页面预览<span class="l2">(A)</span></div>
<div class="mi" style="top:60px">缩小页面预览<span class="l2">(E)</span></div>
<div class="ms" style="top:82px"></div>
<div class="mi d" style="top:91px">嵌入所有页面缩略图<span class="l2">(B)</span></div>
<div class="mi d" style="top:114px">放弃嵌入的页面缩略图<span class="l2">(T)</span></div>
<div class="ms" style="top:136px"></div>
<div class="mi" style="top:144px;left:29px;letter-spacing:-.05px">Insert Pages...</div>
<svg style="left:190px;top:146px" width="5" height="9" viewBox="0 0 5 9"><path d="M0 0l4.600 4.500L0 9z" fill="#111"/></svg>
<div class="mi d" style="top:168px">逆页序 <span class="l2">(S)...</span></div>
<div class="mi" style="top:191px">交换页面<span class="l2">(W)...</span></div>
<div class="mi" style="top:214px">复制页面<span class="l2">(U)...</span></div>
<div class="mi" style="top:237px">移动页面<span class="l2">(M)...</span></div>
<div class="mi" style="top:260px">拆分文档<span class="l2">(L)...</span></div>
<div class="ms" style="top:282px"></div>
<div class="mi" style="top:291px">旋转页面<span class="l2">(O)...</span></div>
<div class="ms" style="top:313px"></div>
<div class="mi" style="top:322px">页面过渡<span class="l2">(P)</span></div>
<div class="ms" style="top:344px"></div>
<div class="mi" style="top:353px">打印页面<span class="l2">(G)...</span></div>
<div class="mi" style="top:376px">属性<span class="l2">(T)...</span></div>
</div>
<!-- mouse cursor -->
<svg style="left:229px;top:481.500px" width="14" height="20.500" viewBox="0 0 15 22"><path d="M1 1v16.400l3.800-3.600 2.800 6.600 2.600-1.100-2.800-6.400h5.400z" fill="#fff" stroke="#111" stroke-width="1.100" stroke-linejoin="round"/></svg>

</body>
</html>
